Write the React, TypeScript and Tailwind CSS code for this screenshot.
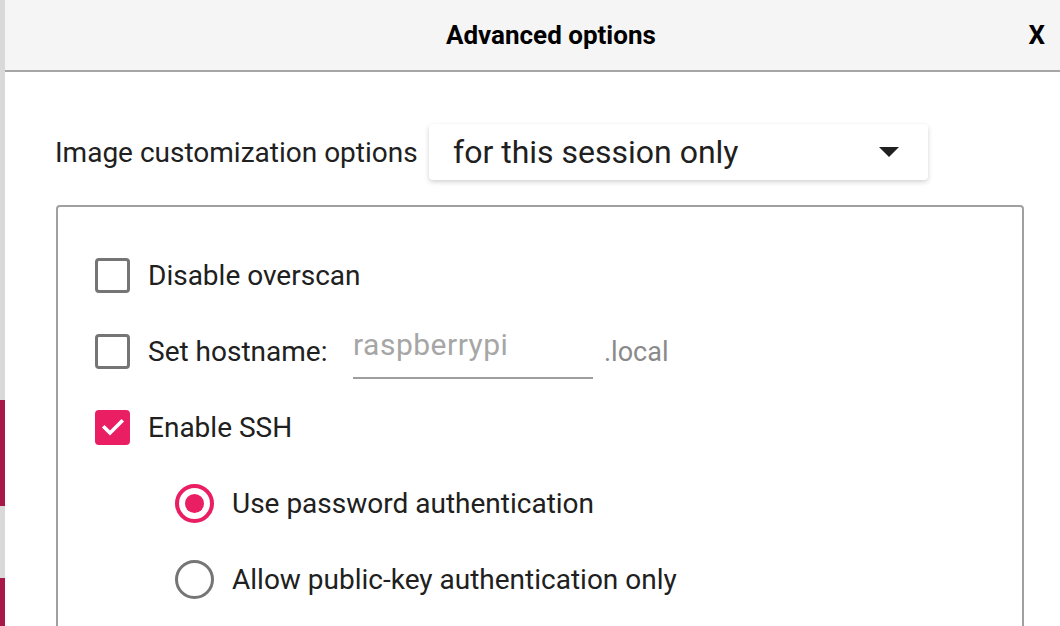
import React from 'react';

const Checkbox = ({ checked = false }: { checked?: boolean }) =>
  checked ? (
    <span className="flex h-[35px] w-[35px] shrink-0 items-center justify-center rounded-[4px] bg-[#e91e63]">
      <svg width="24" height="24" viewBox="0 0 24 24" fill="none">
        <path d="M3.5 12.5l5.5 5.5L20.5 6.5" stroke="#fff" strokeWidth="3.6" strokeLinecap="square" />
      </svg>
    </span>
  ) : (
    <span className="block h-[35px] w-[35px] shrink-0 rounded-[4px] border-[3px] border-[#757575] bg-white" />
  );

const Radio = ({ checked = false }: { checked?: boolean }) => (
  <span
    className={
      checked
        ? 'flex h-[39px] w-[39px] shrink-0 items-center justify-center rounded-full border-[4px] border-[#e91e63]'
        : 'block h-[39px] w-[39px] shrink-0 rounded-full border-[3px] border-[#757575]'
    }
  >
    {checked && <span className="block h-[19px] w-[19px] rounded-full bg-[#e91e63]" />}
  </span>
);

export default function App() {
  return (
    <div className="flex h-[626px] w-[1060px] overflow-hidden bg-white font-['Roboto','Liberation_Sans',sans-serif] text-[#202020]">
      <div className="flex w-[5px] shrink-0 flex-col">
        <div className="h-[400px] bg-[#d9d9d9]" />
        <div className="h-[106px] bg-[#a8194a]" />
        <div className="h-[72px] bg-[#d9d9d9]" />
        <div className="flex-1 bg-[#a8194a]" />
      </div>
      <div className="flex min-w-0 flex-1 flex-col">
        <div className="flex h-[72px] shrink-0 items-center border-b-2 border-[#a6a6a6] bg-[#f5f5f5]">
          <span className="ml-[441px] text-[26px] font-bold text-black">Advanced options</span>
          <span className="ml-auto mr-[15px] text-[26px] font-bold text-black">X</span>
        </div>
        <div className="flex flex-col pl-[50px] pt-[52px]">
          <div className="flex h-[56px] items-center">
            <span className="w-[374px] shrink-0 whitespace-nowrap pt-[1px] text-[28px]">Image customization options</span>
            <div className="flex h-[56px] w-[499px] items-center rounded-[4px] bg-white pl-[24px] pr-[29px] shadow-[0_2px_5px_rgba(0,0,0,0.18)]">
              <span className="text-[32px]">for this session only</span>
              <svg className="ml-auto" width="20" height="10" viewBox="0 0 20 10">
                <path d="M0 0h20L10 10z" fill="#202020" />
              </svg>
            </div>
          </div>
          <div className="ml-[1px] mt-[25px] h-[460px] w-[968px] rounded-[4px] border-2 border-[#a0a0a0] pl-[37px] pt-[30px]">
            <div className="flex h-[76px] items-center">
              <Checkbox />
              <span className="ml-[18px] pt-[2px] text-[28px]">Disable overscan</span>
            </div>
            <div className="flex h-[76px] items-center">
              <Checkbox />
              <span className="ml-[18px] w-[205px] shrink-0 pt-[2px] text-[28px]">Set hostname:</span>
              <div className="flex h-[55px] w-[240px] items-start border-b-2 border-[#9e9e9e]">
                <span className="text-[30px] leading-[42px] tracking-[0.5px] text-[#a6a6a6]">raspberrypi</span>
              </div>
              <span className="ml-[11px] mt-[3px] text-[27px] text-[#8a8a8a]">.local</span>
            </div>
            <div className="flex h-[76px] items-center">
              <Checkbox checked />
              <span className="ml-[18px] pt-[2px] text-[28px]">Enable SSH</span>
            </div>
            <div className="flex h-[76px] items-center pl-[80px]">
              <Radio checked />
              <span className="ml-[18px] pt-[2px] text-[28px]">Use password authentication</span>
            </div>
            <div className="flex h-[76px] items-center pl-[80px]">
              <Radio />
              <span className="ml-[18px] pt-[2px] text-[28px]">Allow public-key authentication only</span>
            </div>
          </div>
        </div>
      </div>
    </div>
  );
}
